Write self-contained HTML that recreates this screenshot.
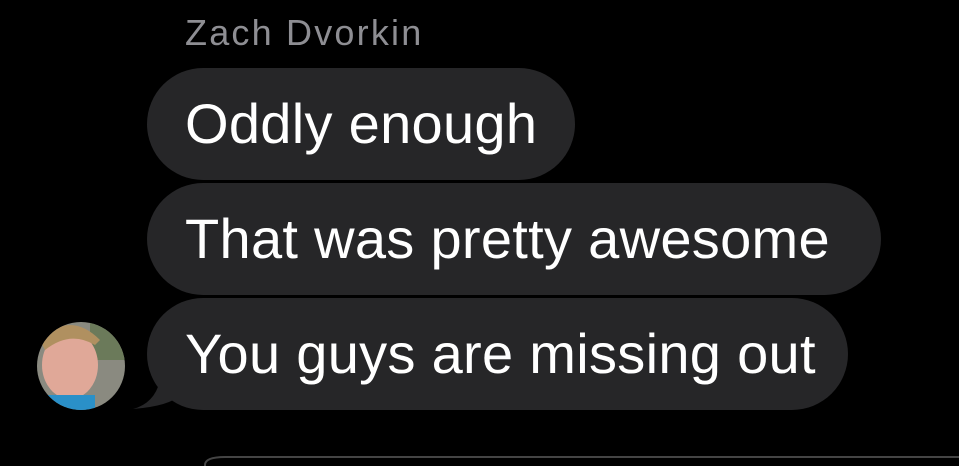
<html><head><style>
body{margin:0;width:959px;height:466px;background:#000;overflow:hidden;position:relative;font-family:"Liberation Sans",sans-serif}
.n{position:absolute;left:185px;top:12px;font-size:36px;letter-spacing:2.2px;color:#8e8e93}
.b{position:absolute;left:147px;height:112px;border-radius:56px;background:#262628;color:#fff;font-size:56px;line-height:112px;padding-left:38px;box-sizing:border-box;letter-spacing:0.3px}
</style></head><body>
<div class="n">Zach Dvorkin</div>
<div class="b" style="top:68px;width:428px">Oddly enough</div>
<div class="b" style="top:183px;width:734px">That was pretty awesome</div>
<div class="b" style="top:298px;width:701px">You guys are missing out</div>
<svg style="position:absolute;left:0;top:300px" width="959" height="166">
<path d="M180 40 L180 95 Q170 106 133 109 Q155 103 160 80 Z" fill="#262628"/>
<defs><clipPath id="c"><circle cx="81" cy="66" r="44"/></clipPath></defs>
<g clip-path="url(#c)">
<rect x="30" y="20" width="110" height="100" fill="#8a8a80"/>
<rect x="90" y="20" width="40" height="40" fill="#6b7a5a"/>
<ellipse cx="70" cy="65" rx="28" ry="34" fill="#e0a898"/>
<path d="M40 40 Q70 10 100 40 L95 45 Q70 30 45 50Z" fill="#b09060"/>
<rect x="35" y="95" width="60" height="30" fill="#2a90c8"/>
</g>
<path d="M205 166 L205 165 Q205 157 225 157 L959 157" stroke="#444" stroke-width="2" fill="none"/>
</svg>
</body></html>
